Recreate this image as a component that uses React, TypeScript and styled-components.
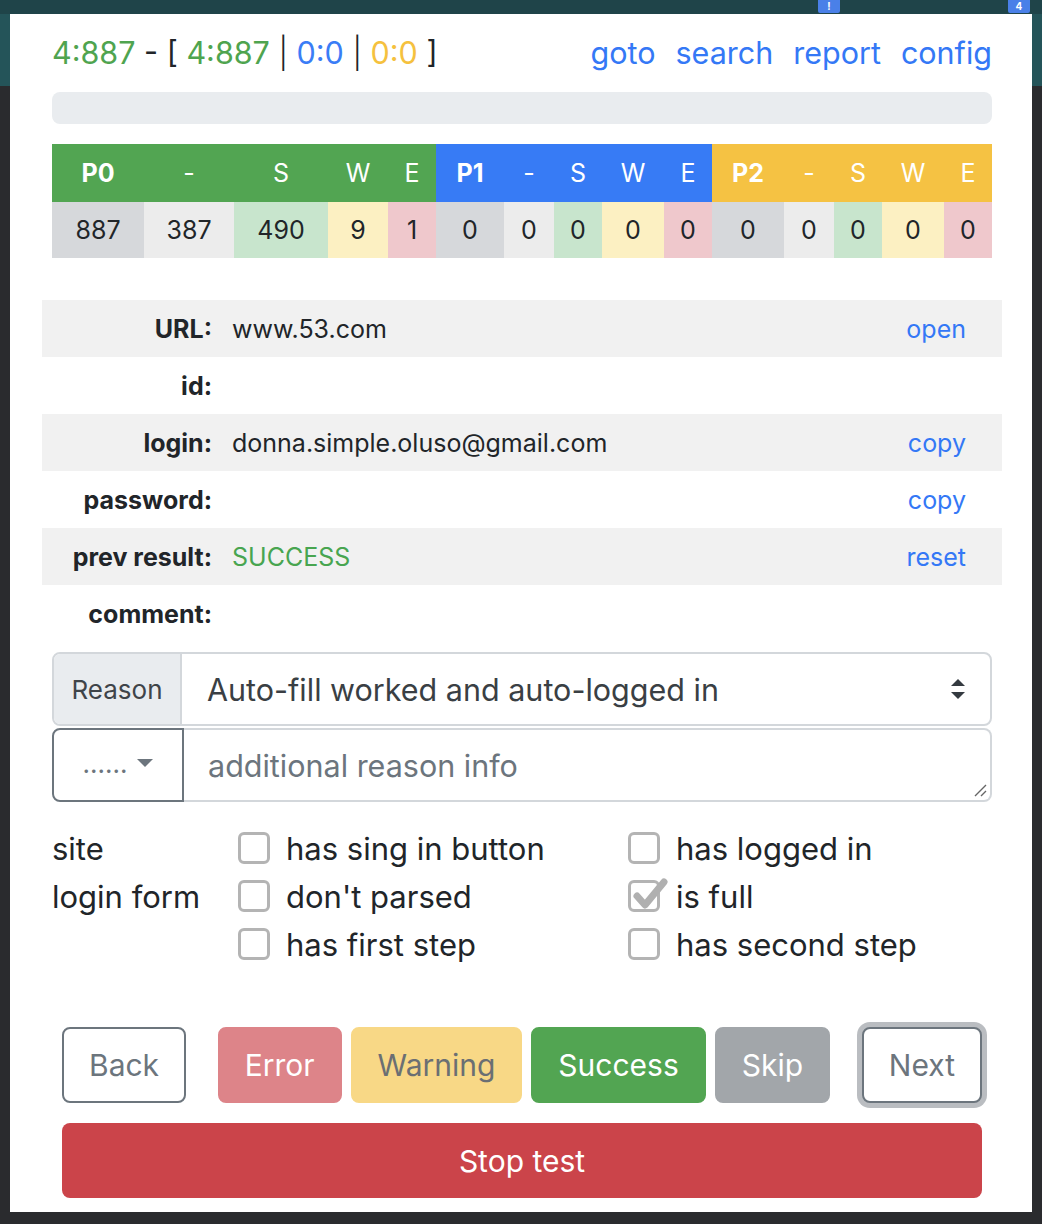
import React from "react";
import styled, { createGlobalStyle } from "styled-components";

const Global = createGlobalStyle`
  html, body { margin: 0; padding: 0; }
  body {
    background: #2a2b2e;
    font-family: Inter, "Liberation Sans", Arial, sans-serif;
    color: #212529;
  }
  * { box-sizing: border-box; }
`;

const Backdrop = styled.div`
  min-height: 1224px;
  padding: 0 10px 11px;
  background: linear-gradient(to bottom, #245459 0, #245459 86px, #2a2b2e 86px, #2a2b2e 100%);
`;

const TopStrip = styled.div`
  height: 14px;
  margin: 0 -10px;
  background: #1f4449;
  display: flex;
  justify-content: flex-end;
  gap: 168px;
  padding-right: 12px;
`;

const Badge = styled.span`
  width: 22px;
  height: 13px;
  background: #4a80e8;
  color: #fff;
  font-size: 10px;
  font-weight: 700;
  line-height: 12px;
  text-align: center;
  border-radius: 0 0 2px 2px;
`;

const Popup = styled.div`
  background: #fff;
  padding: 16px 40px 14px 42px;
  display: flex;
  flex-direction: column;
`;

const Header = styled.div`
  height: 44px;
  display: flex;
  justify-content: space-between;
  align-items: center;
  font-size: 30.5px;
`;

const Counter = styled.div`
  white-space: pre;
`;

const Tone = styled.span<{ $c: string }>`
  color: ${(p) => p.$c};
`;

const Sep = styled.span`
  font-weight: 300;
`;

const Nav = styled.nav`
  display: flex;
  gap: 20px;
`;

const NavLink = styled.a`
  color: #3478f6;
  text-decoration: none;
`;

const Progress = styled.div`
  margin-top: 18px;
  height: 32px;
  border-radius: 8px;
  background: #e9ecef;
`;

const StatGrid = styled.div`
  margin-top: 20px;
  display: grid;
  grid-template-columns: 92px 90px 94px 60px 48px 68px 50px 48px 62px 48px 72px 50px 48px 62px 48px;
  grid-template-rows: 58px 56px;
  font-size: 25px;
`;

const HeadCell = styled.div<{ $bg: string; $bold?: boolean }>`
  background: ${(p) => p.$bg};
  color: #fff;
  font-weight: ${(p) => (p.$bold ? 700 : 400)};
  display: flex;
  align-items: center;
  justify-content: center;
`;

const DataCell = styled.div<{ $bg: string }>`
  background: ${(p) => p.$bg};
  color: #212529;
  display: flex;
  align-items: center;
  justify-content: center;
`;

const InfoList = styled.div`
  margin: 42px -10px 0;
  display: flex;
  flex-direction: column;
`;

const InfoRow = styled.div<{ $shade?: boolean }>`
  height: 57px;
  display: grid;
  grid-template-columns: 170px 1fr auto;
  column-gap: 20px;
  align-items: center;
  padding-right: 36px;
  font-size: 25px;
  background: ${(p) => (p.$shade ? "#f1f1f1" : "#fff")};
`;

const InfoLabel = styled.div`
  text-align: right;
  font-weight: 700;
  color: #212529;
`;

const InfoValue = styled.div<{ $ok?: boolean }>`
  color: ${(p) => (p.$ok ? "#48a550" : "#212529")};
`;

const InfoAction = styled.a`
  color: #3478f6;
  text-decoration: none;
`;

const ReasonGroup = styled.div`
  margin-top: 10px;
  height: 74px;
  display: flex;
  border: 2px solid #d3d7db;
  border-radius: 8px;
  overflow: hidden;
`;

const Addon = styled.div`
  width: 128px;
  background: #e9ecef;
  border-right: 2px solid #d3d7db;
  display: flex;
  align-items: center;
  justify-content: center;
  font-size: 26px;
  color: #3f4449;
`;

const SelectBox = styled.div`
  flex: 1;
  display: flex;
  align-items: center;
  justify-content: space-between;
  padding: 0 24px 0 25px;
  font-size: 30.5px;
  color: #3a3f44;
`;

const InfoGroup = styled.div`
  margin-top: 2px;
  height: 74px;
  display: flex;
`;

const DropButton = styled.div`
  width: 132px;
  border: 2px solid #6c757d;
  border-radius: 8px 0 0 8px;
  display: flex;
  align-items: center;
  justify-content: center;
  gap: 10px;
  font-size: 26px;
  color: #6c757d;
  padding-bottom: 4px;
`;

const TextArea = styled.div`
  flex: 1;
  position: relative;
  border: 2px solid #d3d7db;
  border-left: none;
  border-radius: 0 8px 8px 0;
  display: flex;
  align-items: center;
  padding-left: 24px;
  font-size: 30.5px;
  color: #6c757d;
`;

const Grip = styled.svg`
  position: absolute;
  right: 3px;
  bottom: 3px;
`;

const Checks = styled.div`
  margin-top: 22px;
  display: grid;
  grid-template-columns: 186px 390px 1fr;
  grid-auto-rows: 48px;
  font-size: 31px;
  color: #212529;
`;

const GroupName = styled.div`
  display: flex;
  align-items: center;
`;

const CheckItem = styled.label`
  display: flex;
  align-items: center;
  gap: 16px;
`;

const Box = styled.span`
  position: relative;
  width: 32px;
  height: 32px;
  border: 3px solid #b4b4b4;
  border-radius: 6px;
  flex: none;
`;

const Tick = styled.svg`
  position: absolute;
  left: -1px;
  top: -7px;
`;

const Actions = styled.div`
  margin: 59px 10px 0;
  display: flex;
  justify-content: space-between;
  align-items: center;
`;

const Middle = styled.div`
  display: flex;
  gap: 9px;
`;

const Btn = styled.button<{ $bg?: string; $fg: string; $outline?: boolean; $ring?: boolean }>`
  height: 76px;
  padding: 0 25px;
  font-family: inherit;
  font-size: 30px;
  border-radius: 8px;
  cursor: pointer;
  color: ${(p) => p.$fg};
  background: ${(p) => p.$bg || "#fff"};
  border: 2px solid ${(p) => (p.$outline ? "#6c757d" : p.$bg)};
  box-shadow: ${(p) => (p.$ring ? "0 0 0 5px #babdc1" : "none")};
`;

const StopBtn = styled.button`
  margin: 20px 10px 0;
  height: 75px;
  border: none;
  border-radius: 8px;
  background: #cb444a;
  color: #fff;
  font-family: inherit;
  font-size: 30px;
  cursor: pointer;
`;

type Kind = "t" | "d" | "s" | "w" | "e";
const dataBg: Record<Kind, string> = {
  t: "#d6d8db",
  d: "#ececec",
  s: "#c8e5cd",
  w: "#fcf0c2",
  e: "#efc8cc",
};

const groups = [
  { name: "P0", color: "#52a552", values: ["887", "387", "490", "9", "1"] },
  { name: "P1", color: "#377bf5", values: ["0", "0", "0", "0", "0"] },
  { name: "P2", color: "#f5c243", values: ["0", "0", "0", "0", "0"] },
];
const kinds: Kind[] = ["t", "d", "s", "w", "e"];
const subHeads = ["-", "S", "W", "E"];

const info = [
  { label: "URL:", value: "www.53.com", action: "open" },
  { label: "id:", value: "", action: "" },
  { label: "login:", value: "donna.simple.oluso@gmail.com", action: "copy" },
  { label: "password:", value: "", action: "copy" },
  { label: "prev result:", value: "SUCCESS", action: "reset", ok: true },
  { label: "comment:", value: "", action: "" },
];

const checkRows = [
  { group: "site", a: "has sing in button", b: "has logged in", bChecked: false },
  { group: "login form", a: "don't parsed", b: "is full", bChecked: true },
  { group: "", a: "has first step", b: "has second step", bChecked: false },
];

function Check({ label, checked }: { label: string; checked?: boolean }) {
  return (
    <CheckItem>
      <Box>
        {checked && (
          <Tick width="42" height="36" viewBox="0 0 42 36">
            <path
              d="M7 20 L15 29 L34 6"
              fill="none"
              stroke="#b0b0b0"
              strokeWidth="7"
              strokeLinecap="round"
              strokeLinejoin="round"
            />
          </Tick>
        )}
      </Box>
      {label}
    </CheckItem>
  );
}

export default function App() {
  return (
    <>
      <Global />
      <Backdrop>
        <TopStrip>
          <Badge>!</Badge>
          <Badge>4</Badge>
        </TopStrip>
        <Popup>
          <Header>
            <Counter>
              <Tone $c="#4fa44f">4:887</Tone>
              {" - [ "}
              <Tone $c="#4fa44f">4:887</Tone>
              <Sep>{" | "}</Sep>
              <Tone $c="#3a7df6">0:0</Tone>
              <Sep>{" | "}</Sep>
              <Tone $c="#f5c13e">0:0</Tone>
              {" ]"}
            </Counter>
            <Nav>
              <NavLink>goto</NavLink>
              <NavLink>search</NavLink>
              <NavLink>report</NavLink>
              <NavLink>config</NavLink>
            </Nav>
          </Header>

          <Progress />

          <StatGrid>
            {groups.map((g) => (
              <React.Fragment key={g.name}>
                <HeadCell $bg={g.color} $bold>
                  {g.name}
                </HeadCell>
                {subHeads.map((h) => (
                  <HeadCell key={h} $bg={g.color}>
                    {h}
                  </HeadCell>
                ))}
              </React.Fragment>
            ))}
            {groups.map((g) =>
              g.values.map((v, i) => (
                <DataCell key={g.name + i} $bg={dataBg[kinds[i]]}>
                  {v}
                </DataCell>
              ))
            )}
          </StatGrid>

          <InfoList>
            {info.map((r, i) => (
              <InfoRow key={r.label} $shade={i % 2 === 0}>
                <InfoLabel>{r.label}</InfoLabel>
                <InfoValue $ok={r.ok}>{r.value}</InfoValue>
                <InfoAction>{r.action}</InfoAction>
              </InfoRow>
            ))}
          </InfoList>

          <ReasonGroup>
            <Addon>Reason</Addon>
            <SelectBox>
              Auto-fill worked and auto-logged in
              <svg width="16" height="22" viewBox="0 0 16 22">
                <path d="M8 1 L15 8 L1 8 Z" fill="#343a40" />
                <path d="M1 14 L15 14 L8 21 Z" fill="#343a40" />
              </svg>
            </SelectBox>
          </ReasonGroup>

          <InfoGroup>
            <DropButton>
              ......
              <svg width="16" height="9" viewBox="0 0 16 9">
                <path d="M0 0 L16 0 L8 8 Z" fill="#6c757d" />
              </svg>
            </DropButton>
            <TextArea>
              additional reason info
              <Grip width="14" height="14" viewBox="0 0 14 14">
                <path d="M13 2 L2 13 M13 8 L8 13" stroke="#666" strokeWidth="1.4" />
              </Grip>
            </TextArea>
          </InfoGroup>

          <Checks>
            {checkRows.map((r, i) => (
              <React.Fragment key={i}>
                <GroupName>{r.group}</GroupName>
                <Check label={r.a} />
                <Check label={r.b} checked={r.bChecked} />
              </React.Fragment>
            ))}
          </Checks>

          <Actions>
            <Btn $outline $fg="#6c757d">
              Back
            </Btn>
            <Middle>
              <Btn $bg="#dd8489" $fg="#fff">
                Error
              </Btn>
              <Btn $bg="#f8d886" $fg="#6b6f73">
                Warning
              </Btn>
              <Btn $bg="#52a552" $fg="#fff">
                Success
              </Btn>
              <Btn $bg="#a2a6aa" $fg="#fff">
                Skip
              </Btn>
            </Middle>
            <Btn $outline $ring $fg="#6c757d">
              Next
            </Btn>
          </Actions>

          <StopBtn>Stop test</StopBtn>
        </Popup>
      </Backdrop>
    </>
  );
}
